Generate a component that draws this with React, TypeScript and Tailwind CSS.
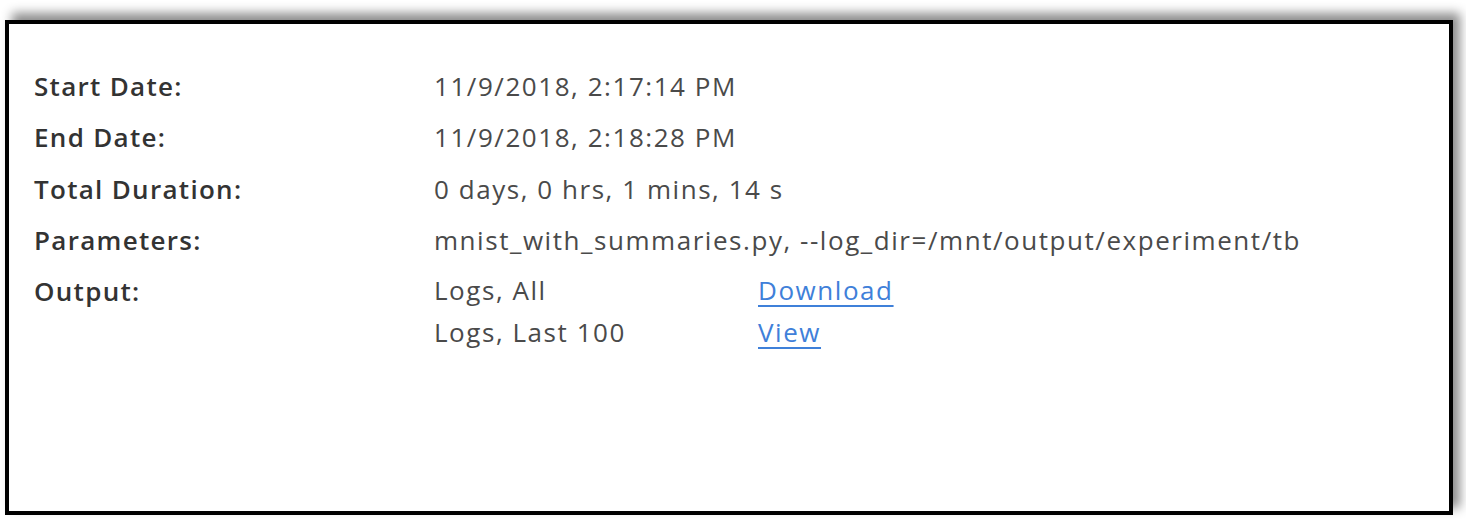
import React from "react";

const rows: { label: string; value: string }[] = [
  { label: "Start Date:", value: "11/9/2018, 2:17:14 PM" },
  { label: "End Date:", value: "11/9/2018, 2:18:28 PM" },
  { label: "Total Duration:", value: "0 days, 0 hrs, 1 mins, 14 s" },
  { label: "Parameters:", value: "mnist_with_summaries.py, --log_dir=/mnt/output/experiment/tb" },
];

const outputs = [
  { name: "Logs, All", link: "Download" },
  { name: "Logs, Last 100", link: "View" },
];

export default function App() {
  return (
    <div
      className="w-[1466px] h-[522px] bg-white pt-[20px] pl-[5px]"
      style={{ fontFamily: '"Open Sans", "Noto Sans", sans-serif' }}
    >
      <div className="w-[1448px] h-[495px] border-[4px] border-black bg-white shadow-[7px_-7px_10px_rgba(0,0,0,0.45)] pt-[37px] pl-[25px]">
        <div className="flex flex-col text-[26px] tracking-[1.55px]">
          {rows.map((r) => (
            <div key={r.label} className="flex leading-[51.3px]">
              <div className="w-[400px] shrink-0 font-semibold text-[#333333] tracking-[1.3px]">{r.label}</div>
              <div className="text-[#4a4a4a] whitespace-nowrap">{r.value}</div>
            </div>
          ))}
          <div className="flex items-start">
            <div className="w-[400px] shrink-0 font-semibold text-[#333333] leading-[51.3px] tracking-[1.3px]">Output:</div>
            <div className="mt-[3px] flex flex-col leading-[42px]">
              {outputs.map((o) => (
                <div key={o.name} className="flex">
                  <div className="w-[324px] shrink-0 text-[#4a4a4a]">{o.name}</div>
                  <a
                    href="#"
                    className="text-[#3f80d9] underline decoration-[2px] underline-offset-[5px]"
                  >
                    {o.link}
                  </a>
                </div>
              ))}
            </div>
          </div>
        </div>
      </div>
    </div>
  );
}
